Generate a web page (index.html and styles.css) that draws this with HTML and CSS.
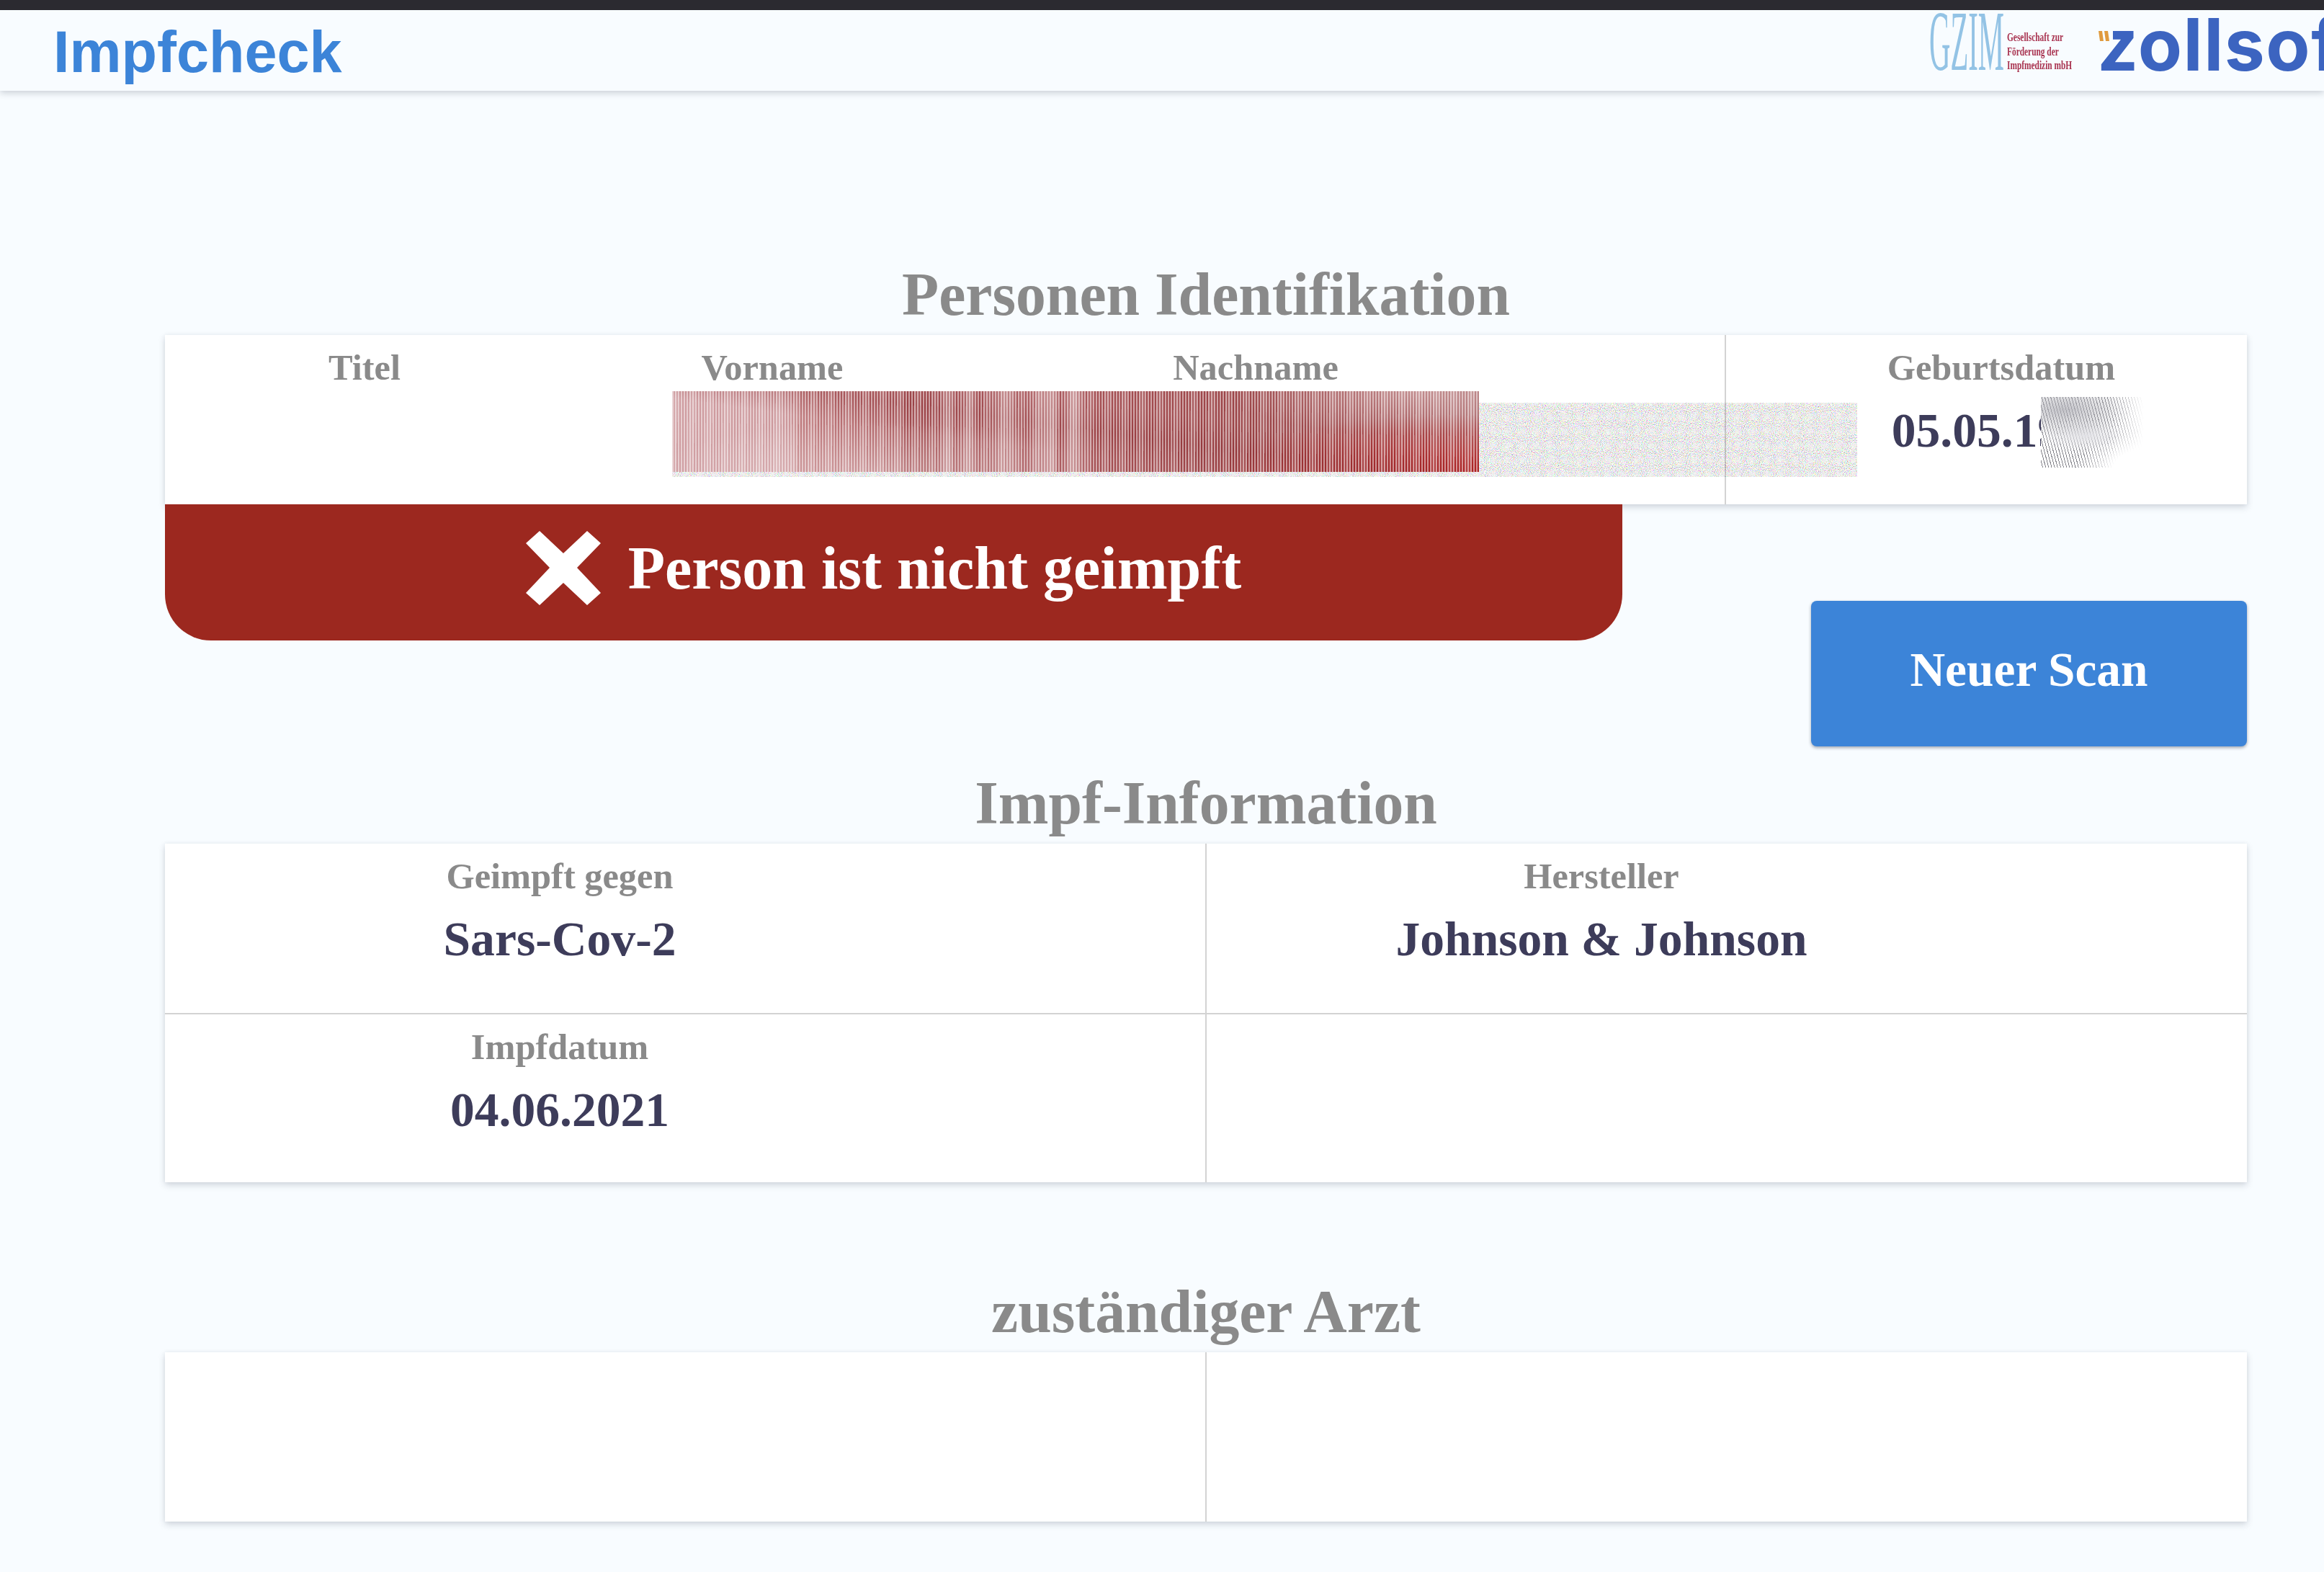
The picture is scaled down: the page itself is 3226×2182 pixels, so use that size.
FILE: index.html
```html
<!DOCTYPE html>
<html lang="de">
<head>
<meta charset="utf-8">
<title>Impfcheck</title>
<link rel="stylesheet" href="styles.css">
</head>
<body>
<header class="app-header">
  <div class="app-title">Impfcheck</div>
  <div class="logos">
    <div class="gzim-mark"><span class="gzim-letters">GZIM</span></div>
    <div class="gzim-text">
      <span>Gesellschaft zur</span>
      <span>Förderung der</span>
      <span>Impfmedizin mbH</span>
    </div>
    <div class="zollsoft">
      <svg class="zollsoft-ticks" viewBox="0 0 22 17" aria-hidden="true">
        <rect width="22" height="17" fill="#f8fcff"/>
        <path d="M2 1h5l2 14H4zM10 1h5l2 14h-5z" fill="#e09a3e"/>
      </svg>
      zollsoft
    </div>
  </div>
</header>

<main class="page">
  <h2 class="section-title">Personen Identifikation</h2>
  <section class="card person-card">
    <div class="cell"><div class="label">Titel</div></div>
    <div class="cell"><div class="label">Vorname</div></div>
    <div class="cell"><div class="label">Nachname</div></div>
    <div class="cell"></div>
    <div class="cell birth-cell">
      <div class="label">Geburtsdatum</div>
      <div class="value value-redacted">05.05.19</div>
    </div>
    <svg class="redact-noise" aria-hidden="true">
      <filter id="grain" x="0" y="0" width="100%" height="100%">
        <feTurbulence type="fractalNoise" baseFrequency="0.95" numOctaves="2" seed="4"/>
        <feColorMatrix type="matrix" values="1.9 0 0 0 -0.1  0 1.9 0 0 -0.1  0 0 1.9 0 -0.1  0 0 0 0 1"/>
      </filter>
      <rect width="100%" height="100%" filter="url(#grain)"/>
    </svg>
    <div class="redact-red"></div>
    <div class="redact-grey"></div>
  </section>

  <div class="status-row">
    <div class="status-banner">
      <svg class="status-icon" viewBox="0 0 104 103" aria-hidden="true">
        <path d="M19 0 52 31 85 0 104 17 71 51 104 86 85 103 52 72 19 103 0 86 33 51 0 17Z" fill="#fff"/>
      </svg>
      <span>Person ist nicht geimpft</span>
    </div>
    <button class="scan-button" type="button">Neuer Scan</button>
  </div>

  <h2 class="section-title">Impf-Information</h2>
  <section class="card info-card">
    <div class="cell">
      <div class="label">Geimpft gegen</div>
      <div class="value">Sars-Cov-2</div>
    </div>
    <div class="cell">
      <div class="label">Hersteller</div>
      <div class="value">Johnson &amp; Johnson</div>
    </div>
    <div class="cell">
      <div class="label">Impfdatum</div>
      <div class="value">04.06.2021</div>
    </div>
    <div class="cell"></div>
  </section>

  <h2 class="section-title section-title-far">zuständiger Arzt</h2>
  <section class="card info-card">
    <div class="cell"></div>
    <div class="cell"></div>
  </section>
</main>
</body>
</html>
```
FILE: styles.css
```css
* { box-sizing: border-box; }

html, body {
  margin: 0;
  min-height: 100vh;
  background: #f8fcff;
  font-family: "Liberation Serif", "Times New Roman", serif;
  font-variant-ligatures: none;
  overflow: hidden;
}

.app-header {
  display: flex;
  justify-content: space-between;
  align-items: flex-start;
  height: 126px;
  padding-left: 74px;
  background: #f8fcff;
  border-top: 14px solid #2b2a30;
  box-shadow: 0 3px 9px rgba(40, 50, 70, 0.22);
  position: relative;
}

.app-title {
  margin-top: 14px;
  font-family: "Liberation Sans", Arial, sans-serif;
  font-weight: 700;
  font-size: 81px;
  line-height: 89px;
  color: #3c84d8;
}

.logos {
  display: flex;
  align-items: flex-start;
  flex: none;
  width: 548px;
  height: 110px;
}

.gzim-mark {
  flex: none;
  width: 104px;
  line-height: 88px;
  font-size: 118px;
  color: #93c3e5;
  white-space: nowrap;
}

.gzim-letters {
  display: inline-block;
  transform: scaleX(0.345);
  transform-origin: left center;
}

.gzim-text {
  flex: none;
  width: 128px;
  margin-top: 28px;
  margin-left: 4px;
  font-size: 17px;
  font-weight: 700;
  line-height: 19.5px;
  color: #a8324f;
  white-space: nowrap;
}

.gzim-text span {
  display: block;
  transform: scaleX(0.67);
  transform-origin: left center;
}

.zollsoft {
  position: relative;
  flex: none;
  margin-top: -2px;
  margin-left: -3px;
  font-family: Inter, "Liberation Sans", sans-serif;
  font-weight: 700;
  font-size: 100px;
  line-height: 100px;
  letter-spacing: 1.5px;
  color: #3c64c0;
  white-space: nowrap;
}

.zollsoft-ticks {
  position: absolute;
  left: 0;
  top: 30px;
  width: 22px;
  height: 17px;
}

.page {
  padding: 227px 107px 0 229px;
}

.section-title {
  margin: 0;
  font-size: 83.7px;
  font-weight: 700;
  line-height: 112px;
  color: #8a8a8a;
  text-align: center;
}

.section-title-far { margin-top: 124px; }

.card {
  background: #fff;
  box-shadow: 0 4px 9px rgba(40, 50, 70, 0.18), 0 0 6px rgba(40, 50, 70, 0.05);
}

.cell {
  padding-top: 15px;
  text-align: center;
}

.label {
  font-size: 50.4px;
  font-weight: 700;
  line-height: 60px;
  color: #8a8a8a;
}

.value {
  margin-top: 18px;
  font-size: 67.6px;
  font-weight: 700;
  line-height: 80px;
  color: #3d3c5a;
}

.value-redacted { padding-right: 68px; }

.person-card {
  position: relative;
  display: grid;
  grid-template-columns: 554px 578px 764px 269px 725px;
  height: 235px;
}

.birth-cell {
  padding-left: 41px;
  border-left: 2px solid #d3d3d3;
}

.redact-noise {
  position: absolute;
  left: 704px;
  top: 94px;
  width: 1645px;
  height: 103px;
  mix-blend-mode: multiply;
}

.redact-red {
  position: absolute;
  left: 704px;
  top: 78px;
  width: 1120px;
  height: 112px;
  background:
    repeating-linear-gradient(90deg, rgba(255, 255, 255, 0.5) 0 2px, rgba(255, 255, 255, 0) 2px 4px),
    repeating-linear-gradient(92deg, rgba(255, 255, 255, 0.12) 0 9px, rgba(255, 255, 255, 0) 9px 24px),
    linear-gradient(90deg, rgba(255, 255, 255, 0) 33%, rgba(255, 255, 255, 0.3) 34%, rgba(255, 255, 255, 0) 35%, rgba(255, 255, 255, 0.25) 37%, rgba(255, 255, 255, 0) 38%, rgba(255, 255, 255, 0.3) 42%, rgba(255, 255, 255, 0) 43%, rgba(255, 255, 255, 0.35) 47%, rgba(255, 255, 255, 0) 48%, rgba(255, 255, 255, 0.35) 50%, rgba(255, 255, 255, 0) 51.5%),
    linear-gradient(188deg, rgba(130, 30, 35, 0) 34%, rgba(130, 30, 35, 0.3) 48%, rgba(130, 30, 35, 0) 62%),
    radial-gradient(ellipse 380px 80px at 100% 100%, rgba(180, 20, 20, 0.85), rgba(180, 20, 20, 0)),
    radial-gradient(ellipse 300px 70px at 25% 100%, rgba(255, 255, 255, 0.3), rgba(255, 255, 255, 0)),
    radial-gradient(ellipse 260px 60px at 92% 0, rgba(240, 225, 225, 0.4), rgba(240, 225, 225, 0)),
    linear-gradient(90deg, #cf9da1 0, #cc979b 14.5%, #bf7b7e 15.5%, #ae5f63 28%, #a44f53 29%, #a75256 50%, #9b4346 70%, #a04e51 90%, #a96568 100%);
}

.redact-grey {
  position: absolute;
  left: 2604px;
  top: 86px;
  width: 162px;
  height: 98px;
  background:
    linear-gradient(90deg, rgba(255, 255, 255, 0) 58%, #fff 88%),
    radial-gradient(ellipse 110px 50px at 100% 100%, #fff 55%, rgba(255, 255, 255, 0)),
    radial-gradient(ellipse 100px 38px at 20% 18%, rgba(175, 175, 182, 0.75), rgba(175, 175, 182, 0)),
    radial-gradient(ellipse 70px 24px at 38% 55%, rgba(226, 226, 230, 0.95), rgba(226, 226, 230, 0)),
    repeating-linear-gradient(75deg, #fff 0 2px, #85858c 2px 3px, #fff 3px 4px);
}

.status-row {
  position: relative;
  display: flex;
  justify-content: space-between;
  align-items: flex-start;
}

.status-banner {
  display: flex;
  align-items: center;
  justify-content: center;
  gap: 38px;
  width: 2023px;
  height: 189px;
  padding: 0 28px 12px 0;
  background: #9c281f;
  border-radius: 0 0 64px 64px;
  font-size: 84px;
  font-weight: 700;
  color: #fff;
}

.status-icon {
  flex: none;
  width: 104px;
  height: 103px;
}

.scan-button {
  flex: none;
  width: 605px;
  height: 202px;
  margin-top: 134px;
  padding: 0 0 11px;
  border: 0;
  border-radius: 8px;
  background: #3c84d8;
  box-shadow: 0 2px 4px rgba(30, 40, 60, 0.4);
  font-family: inherit;
  font-size: 67.4px;
  font-weight: 700;
  color: #fff;
}

.status-row + .section-title { margin-top: 23px; }

.info-card {
  display: grid;
  grid-template-columns: 1444px 1fr;
  grid-auto-rows: 235px;
}

.info-card .cell { padding-right: 348px; }

.info-card .cell:nth-child(even) { border-left: 2px solid #d3d3d3; }

.info-card .cell:nth-child(n+3) { border-top: 2px solid #d3d3d3; }
```
